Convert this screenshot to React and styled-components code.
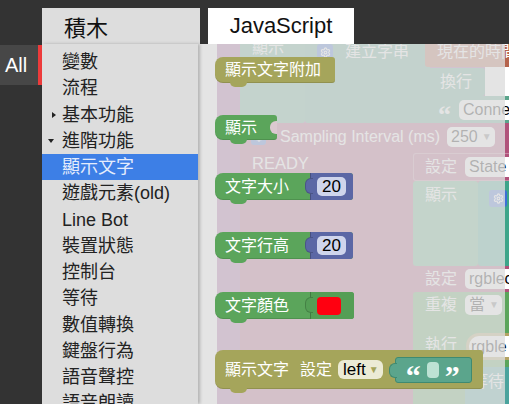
import React from "react";
import styled, { createGlobalStyle } from "styled-components";
import { Settings } from "lucide-react";

const GlobalStyle = createGlobalStyle`
  html, body {
    margin: 0;
    padding: 0;
    background: #333;
  }
  body {
    font-family: "Liberation Sans", "Noto Sans CJK TC", sans-serif;
  }
  * {
    box-sizing: border-box;
  }
`;

const Page = styled.div`
  width: 509px;
  height: 404px;
  overflow: hidden;
  background: #333;
  display: flex;
  flex-direction: column;
`;

const TopBar = styled.div`
  height: 44px;
  flex: none;
  display: flex;
  align-items: flex-end;
  gap: 8px;
  padding-left: 42px;
`;

const Tab = styled.div`
  height: 36px;
  width: ${(p) => p.$w}px;
  background: ${(p) => p.$bg};
  color: #111;
  font-size: ${(p) => p.$size}px;
  display: flex;
  align-items: center;
  justify-content: ${(p) => (p.$center ? "center" : "flex-start")};
  padding-left: ${(p) => p.$pad || 0}px;
`;

const Main = styled.div`
  flex: 1;
  display: flex;
  min-height: 0;
`;

const Rail = styled.div`
  width: 42px;
  flex: none;
  padding-top: 1px;
`;

const AllTab = styled.div`
  height: 40px;
  background: #474747;
  border-right: 4px solid #ee3b3b;
  color: #fff;
  font-size: 20px;
  padding-left: 5px;
  display: flex;
  align-items: center;
`;

const Menu = styled.div`
  width: 156px;
  flex: none;
  background: #ddd;
  padding-top: 5px;
  position: relative;
  z-index: 2;
  box-shadow: 2px 0 3px rgba(0, 0, 0, 0.22);
`;

const MenuItem = styled.div`
  height: 26.25px;
  display: flex;
  align-items: center;
  padding-left: 6px;
  font-size: 18px;
  line-height: 1;
  white-space: nowrap;
  color: ${(p) => (p.$active ? "#e4ecfc" : "#222")};
  background: ${(p) => (p.$active ? "#3d7fe6" : "transparent")};
`;

const ArrowSlot = styled.span`
  width: 14px;
  flex: none;
  display: flex;
  align-items: center;
`;

const Arrow = styled.span`
  width: 0;
  height: 0;
  ${(p) =>
    p.$dir === "down"
      ? `border-left: 3.5px solid transparent;
         border-right: 3.5px solid transparent;
         border-top: 4px solid #222;
         margin-left: 0px;`
      : `border-top: 3.5px solid transparent;
         border-bottom: 3.5px solid transparent;
         border-left: 4px solid #222;
         margin-left: 3.5px;`}
`;

const Canvas = styled.div`
  flex: 1;
  position: relative;
  overflow: hidden;
  background: #fff;
  font-family: "Liberation Sans", "Noto Sans CJK TC", sans-serif;
`;

/* workspace blocks: their spot on the canvas is the content */
const WsBlock = styled.div`
  position: absolute;
  left: ${(p) => p.$x}px;
  top: ${(p) => p.$y}px;
  width: ${(p) => p.$w}px;
  height: ${(p) => p.$h}px;
  background: ${(p) => p.$bg};
  border-radius: ${(p) => p.$r ?? 3}px;
  border: ${(p) => p.$border || "none"};
  padding-left: ${(p) => p.$pl || 0}px;
  padding-top: ${(p) => p.$pt || 0}px;
  display: flex;
  flex-direction: column;
  color: #fff;
  font-size: 16px;
  line-height: 1;
`;

const WsRow = styled.div`
  height: ${(p) => p.$h}px;
  flex: none;
  display: flex;
  align-items: center;
  gap: ${(p) => p.$gap || 0}px;
  white-space: nowrap;
  font-size: ${(p) => p.$size || 16}px;
`;

const WsField = styled.div`
  height: 20px;
  width: ${(p) => (p.$w ? `${p.$w}px` : "auto")};
  flex: none;
  background: #fff;
  color: #000;
  border-radius: 5px;
  padding: 0 4px;
  display: flex;
  align-items: center;
  gap: 4px;
  font-size: 16px;
  overflow: hidden;
`;

const Caret = styled.span`
  font-size: 10px;
  color: ${(p) => p.$color || "#777"};
`;

const GearBox = styled.div`
  width: ${(p) => p.$w}px;
  height: ${(p) => p.$h}px;
  flex: none;
  background: #3d6fd8;
  border-radius: 3px;
  display: flex;
  align-items: center;
  justify-content: center;
`;

const Quote = styled.span`
  font-family: "Liberation Serif", serif;
  font-weight: 700;
  font-size: ${(p) => p.$size || 22}px;
  color: #fff;
  line-height: 1;
  height: ${(p) => (p.$size || 22) * 0.55}px;
  overflow: visible;
`;

const WsLabel = styled.span`
  width: ${(p) => p.$w}px;
  margin: 0 ${(p) => p.$mr || 0}px 0 ${(p) => p.$ml || 0}px;
  flex: none;
`;

const Flyout = styled.div`
  position: absolute;
  left: 0;
  top: 0;
  bottom: 0;
  width: 307px;
  background: rgba(221, 221, 221, 0.8);
  display: flex;
  flex-direction: column;
  align-items: flex-start;
  padding: 13px 0 0 17px;
`;

const Slot = styled.div`
  height: ${(p) => p.$h}px;
  flex: none;
`;

const FBlock = styled.div`
  position: relative;
  display: inline-flex;
  align-items: center;
  height: ${(p) => p.$h}px;
  background: ${(p) => p.$bg};
  color: #fff;
  font-size: 16px;
  line-height: 1;
  white-space: nowrap;
  padding: 0 ${(p) => p.$pr ?? 0}px 0 10px;
  border-radius: 8px 3px 3px 8px;
  box-shadow: inset 0 -1px 0 rgba(0, 0, 0, 0.12);
  &::after {
    content: "";
    position: absolute;
    left: 15px;
    bottom: -4px;
    width: 17px;
    height: 5px;
    background: ${(p) => p.$bg};
    border-radius: 0 0 7px 7px;
  }
`;

const NotchedBlock = styled(FBlock)`
  &::before {
    content: "";
    position: absolute;
    right: 0;
    top: 6px;
    width: 7px;
    height: 13px;
    background: #dbc9d0;
    border-radius: 6px 0 0 6px;
  }
`;

const Label = styled.span`
  margin-right: ${(p) => p.$mr || 0}px;
`;

const ValueBlock = styled.div`
  position: relative;
  align-self: stretch;
  display: flex;
  align-items: center;
  background: ${(p) => p.$bg};
  padding: 0 ${(p) => p.$pr}px 0 6px;
  border-left: 1px solid rgba(0, 0, 0, 0.22);
  border-radius: 0 3px 3px 0;
  &::before {
    content: "";
    position: absolute;
    left: -6px;
    top: 5px;
    width: 7px;
    height: 14px;
    background: ${(p) => p.$bg};
    border-radius: 6px 0 0 6px;
    border: 1px solid rgba(0, 0, 0, 0.18);
    border-right: none;
  }
`;

const NumberField = styled.div`
  width: 29px;
  height: 19px;
  background: #cfd5ec;
  border-radius: 5px;
  color: #000;
  font-family: "Liberation Sans", sans-serif;
  font-size: 17px;
  display: flex;
  align-items: center;
  justify-content: center;
`;

const ColorSwatch = styled.div`
  width: 24px;
  height: 18px;
  background: #ff0010;
  border-radius: 4px;
`;

const Dropdown = styled.div`
  height: 19px;
  background: #ecebd5;
  border-radius: 6px;
  padding: 0 4px 0 5px;
  margin-right: 12px;
  color: #000;
  font-family: "Liberation Sans", sans-serif;
  font-size: 17px;
  display: flex;
  align-items: center;
  gap: 3px;
`;

const TextValue = styled.div`
  position: relative;
  width: 77px;
  height: 26px;
  background: #5ba58c;
  border: 1px solid #3f8a71;
  border-radius: 3px;
  display: flex;
  align-items: center;
  padding-left: 10px;
  gap: 6px;
  &::before {
    content: "";
    position: absolute;
    left: -7px;
    top: 5px;
    width: 7px;
    height: 13px;
    background: #5ba58c;
    border: 1px solid #3f8a71;
    border-right: none;
    border-radius: 6px 0 0 6px;
  }
`;

const TextSlot = styled.div`
  width: 12px;
  height: 16px;
  background: #bde2d4;
  border-radius: 4px;
`;

const categories = [
  { label: "變數" },
  { label: "流程" },
  { label: "基本功能", arrow: "right" },
  { label: "進階功能", arrow: "down" },
  { label: "顯示文字", active: true },
  { label: "遊戲元素(old)" },
  { label: "Line Bot" },
  { label: "裝置狀態" },
  { label: "控制台" },
  { label: "等待" },
  { label: "數值轉換" },
  { label: "鍵盤行為" },
  { label: "語音聲控" },
  { label: "語音朗讀" },
];

const Gear = ({ w, h, size = 11 }) => (
  <GearBox $w={w} $h={h}>
    <Settings size={size} color="#fff" strokeWidth={2.6} />
  </GearBox>
);

const Workspace = () => (
  <>
    <WsBlock $x={19} $y={-20} $w={320} $h={400} $bg="#a55b99" />
    <WsBlock $x={42} $y={-24} $w={65} $h={103} $bg="#5fab8d" $pl={12} $pt={14}>
      <WsRow $h={28}>顯示</WsRow>
    </WsBlock>
    <WsBlock $x={107} $y={-24} $w={125} $h={103} $bg="#5ba58c" $pl={12} $pt={18}>
      <WsRow $h={28} $gap={12}>
        <Gear w={16} h={17} />
        建立字串
      </WsRow>
    </WsBlock>
    <WsBlock $x={227} $y={-24} $w={95} $h={47} $bg="#b5634c" $pl={12} $pt={18}>
      <WsRow $h={28}>現在的時間</WsRow>
    </WsBlock>
    <WsBlock $x={227} $y={24} $w={60} $h={28} $bg="#5ba58c" $pl={15}>
      <WsRow $h={28}>換行</WsRow>
    </WsBlock>
    <WsBlock $x={287} $y={23} $w={40} $h={29} $bg="#fff" $r={0} />
    <WsBlock $x={227} $y={52} $w={95} $h={27} $bg="#5ba58c" $pl={13}>
      <WsRow $h={27} $gap={8}>
        <Quote $size={26}>“</Quote>
        <WsField $w={70}>Conne</WsField>
      </WsRow>
    </WsBlock>
    <WsBlock $x={42} $y={79} $w={280} $h={300} $bg="#b0527a" $pl={11}>
      <WsRow $h={27} $size={16}>
        <Gear w={15} h={16} size={10} />
        <WsLabel $w={161} $ml={14} $mr={6}>
          Sampling Interval (ms)
        </WsLabel>
        <WsField $w={48}>
          250 <Caret>▼</Caret>
        </WsField>
      </WsRow>
      <WsRow $h={26} $size={16.5} style={{ paddingLeft: 1 }}>
        READY
      </WsRow>
    </WsBlock>
    <WsBlock
      $x={215}
      $y={109}
      $w={110}
      $h={28}
      $bg="#b0527a"
      $pl={11}
      $border="1px solid rgba(255,255,255,0.3)"
    >
      <WsRow $h={26} $gap={8}>
        設定
        <WsField $w={60}>State</WsField>
      </WsRow>
    </WsBlock>
    <WsBlock $x={215} $y={137} $w={65} $h={85} $bg="#5fae80" $pl={12}>
      <WsRow $h={28}>顯示</WsRow>
    </WsBlock>
    <WsBlock $x={280} $y={137} $w={45} $h={85} $bg="#3ea58a" $pl={11} $pt={9}>
      <Gear w={18} h={17} />
    </WsBlock>
    <WsBlock $x={215} $y={222} $w={110} $h={26} $bg="#b0527a" $pl={12}>
      <WsRow $h={26} $gap={8}>
        設定
        <WsField $w={60}>rgblec</WsField>
      </WsRow>
    </WsBlock>
    <WsBlock $x={215} $y={248} $w={110} $h={140} $bg="#5ba55b" $pl={12}>
      <WsRow $h={26} $gap={8}>
        重複
        <WsField $w={37}>
          當 <Caret>▼</Caret>
        </WsField>
      </WsRow>
      <WsRow $h={54}>執行</WsRow>
    </WsBlock>
    <WsBlock
      $x={268}
      $y={289}
      $w={60}
      $h={27}
      $bg="#fff"
      $r={13}
      $pl={2}
      $border="3px solid #b3a364"
    >
      <WsRow $h={21} style={{ color: "#000" }}>
        rgble
      </WsRow>
    </WsBlock>
    <WsBlock $x={267} $y={323} $w={60} $h={60} $bg="#4aa39d" $pl={7}>
      <WsRow $h={30}>等待</WsRow>
    </WsBlock>
  </>
);

const FlyoutBlocks = () => (
  <Flyout>
    <Slot $h={58}>
      <FBlock $h={26} $bg="#a5a55b" $pr={14}>
        顯示文字附加
      </FBlock>
    </Slot>
    <Slot $h={58}>
      <NotchedBlock $h={25} $bg="#5ba55b" $pr={20}>
        顯示
      </NotchedBlock>
    </Slot>
    <Slot $h={59}>
      <FBlock $h={27} $bg="#5ba55b">
        <Label $mr={21}>文字大小</Label>
        <ValueBlock $bg="#5b67a5" $pr={7}>
          <NumberField>20</NumberField>
        </ValueBlock>
      </FBlock>
    </Slot>
    <Slot $h={60}>
      <FBlock $h={27} $bg="#5ba55b">
        <Label $mr={21}>文字行高</Label>
        <ValueBlock $bg="#5b67a5" $pr={7}>
          <NumberField>20</NumberField>
        </ValueBlock>
      </FBlock>
    </Slot>
    <Slot $h={58}>
      <FBlock $h={27} $bg="#5ba55b">
        <Label $mr={21}>文字顏色</Label>
        <ValueBlock $bg="#549e55" $pr={13}>
          <ColorSwatch />
        </ValueBlock>
      </FBlock>
    </Slot>
    <Slot $h={50}>
      <FBlock $h={39} $bg="#a5a55b" $pr={11}>
        <Label $mr={11}>顯示文字</Label>
        <Label $mr={6}>設定</Label>
        <Dropdown>
          left <Caret $color="#a5a55b">▼</Caret>
        </Dropdown>
        <TextValue>
          <Quote $size={30}>“</Quote>
          <TextSlot />
          <Quote $size={30}>”</Quote>
        </TextValue>
      </FBlock>
    </Slot>
  </Flyout>
);

export default function App() {
  return (
    <Page>
      <GlobalStyle />
      <TopBar>
        <Tab $w={158} $bg="#ddd" $size={22} $pad={22}>
          積木
        </Tab>
        <Tab $w={146} $bg="#fff" $size={22} $center>
          JavaScript
        </Tab>
      </TopBar>
      <Main>
        <Rail>
          <AllTab>All</AllTab>
        </Rail>
        <Menu>
          {categories.map((c, i) => (
            <MenuItem key={i} $active={c.active}>
              <ArrowSlot>{c.arrow && <Arrow $dir={c.arrow} />}</ArrowSlot>
              {c.label}
            </MenuItem>
          ))}
        </Menu>
        <Canvas>
          <Workspace />
          <FlyoutBlocks />
        </Canvas>
      </Main>
    </Page>
  );
}
